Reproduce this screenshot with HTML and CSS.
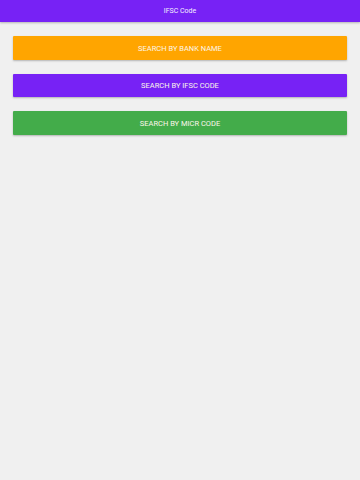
FILE: index.html
```html
<!DOCTYPE html>
<html lang="en">
<head>
    <meta charset="UTF-8">
    <meta name="viewport" content="width=device-width, initial-scale=1.0">
    <title>IFSC Code</title>
    <link rel="stylesheet" href="styles.css">
</head>
<body>
    <header class="toolbar">IFSC Code</header>
    <main class="menu">
        <button class="menu-btn bank">Search by Bank Name</button>
        <button class="menu-btn ifsc">Search by IFSC Code</button>
        <button class="menu-btn micr">Search by MICR Code</button>
    </main>
</body>
</html>
```

FILE: styles.css
```css
body {
    font-family: Roboto, "Liberation Sans", sans-serif;
    margin: 0;
    padding: 0;
    background-color: #f0f0f0;
    height: 480px;
}
.toolbar {
    background-color: #7722f5;
    color: #f4eefe;
    height: 22px;
    line-height: 23px;
    text-align: center;
    font-size: 7px;
    box-shadow: 0 1px 2px rgba(0, 0, 0, 0.25);
}
.menu {
    padding: 14px 13px;
    display: flex;
    flex-direction: column;
    gap: 14px;
}
.menu-btn {
    height: 23.5px;
    border: none;
    border-radius: 1px;
    color: #fdf6ea;
    font-family: inherit;
    font-size: 7.5px;
    text-transform: uppercase;
    box-shadow: 0 1px 2px rgba(0, 0, 0, 0.25);
    padding: 1px 0 0;
}
.bank {
    background-color: #ffa500;
}
.ifsc {
    background-color: #7722f5;
}
.micr {
    background-color: #43ac4a;
}
```
